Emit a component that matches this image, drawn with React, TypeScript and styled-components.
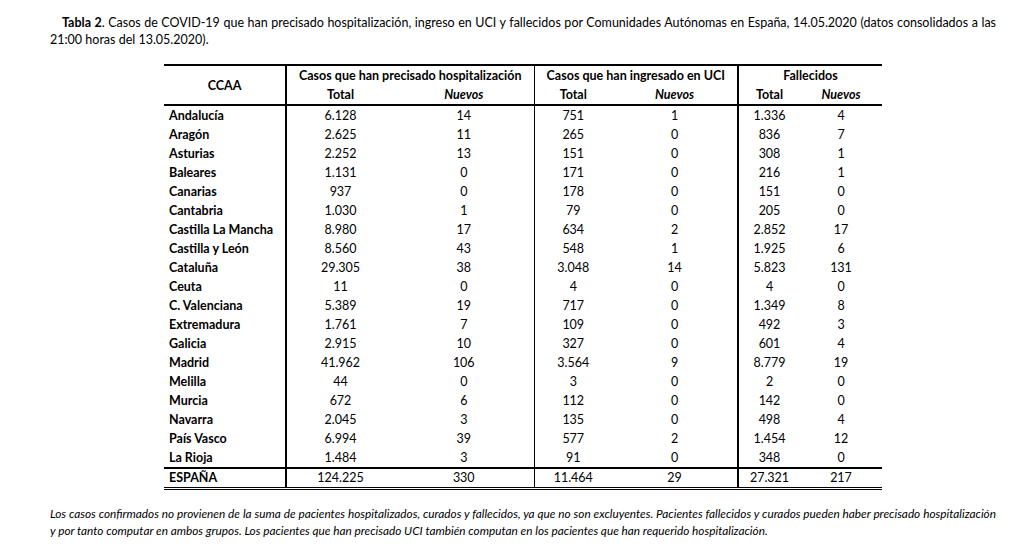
import React from "react";
import styled, { createGlobalStyle } from "styled-components";

const Global = createGlobalStyle`
  html, body { margin: 0; padding: 0; background: #fff; }
  body { font-family: Lato, "Open Sans", "Liberation Sans", sans-serif; color: #000; }
`;

const Page = styled.div`
  width: 1018px;
  height: 549px;
  box-sizing: border-box;
  padding: 14px 22px 0 50px;
  overflow: hidden;
`;

const Title = styled.p`
  margin: 0;
  font-size: 12.5px;
  line-height: 17px;
  text-align: justify;
  text-indent: 12px;
`;

const Strong = styled.b`
  font-weight: 700;
`;

const TableWrap = styled.div`
  display: flex;
  justify-content: center;
  margin-top: 16px;
`;

const Table = styled.table`
  width: 718px;
  table-layout: fixed;
  border-collapse: collapse;
  font-size: 12.5px;
  border-top: 2px solid #000;
`;

type Edge = "thick" | "thin" | "none";
const edge = (e?: Edge) =>
  e === "thick" ? "2px solid #000" : e === "thin" ? "1px solid #000" : "none";

const HeadCell = styled.th<{ $right?: Edge; $italic?: boolean; $bottom?: boolean }>`
  padding: 0;
  height: 19px;
  line-height: 19px;
  font-weight: 700;
  font-style: ${(p) => (p.$italic ? "italic" : "normal")};
  text-align: center;
  vertical-align: middle;
  border-right: ${(p) => edge(p.$right)};
  border-bottom: ${(p) => (p.$bottom ? "2px solid #000" : "none")};
  white-space: nowrap;
`;

const NameCell = styled.td<{ $h?: number }>`
  padding: 0 0 0 5px;
  height: ${(p) => p.$h ?? 19}px;
  line-height: ${(p) => p.$h ?? 19}px;
  font-weight: 700;
  text-align: left;
  border-right: 2px solid #000;
  white-space: nowrap;
`;

const NumCell = styled.td<{ $right?: Edge; $h?: number }>`
  padding: 0;
  height: ${(p) => p.$h ?? 19}px;
  line-height: ${(p) => p.$h ?? 19}px;
  text-align: center;
  border-right: ${(p) => edge(p.$right)};
`;

const TotalRow = styled.tr`
  border-top: 2px solid #000;
  border-bottom: 3px double #000;
`;

const Note = styled.p`
  margin: 15px 0 0;
  font-size: 11.8px;
  line-height: 17px;
  font-style: italic;
  text-align: justify;
`;

const rows: [string, string, string, string, string, string, string][] = [
  ["Andalucía", "6.128", "14", "751", "1", "1.336", "4"],
  ["Aragón", "2.625", "11", "265", "0", "836", "7"],
  ["Asturias", "2.252", "13", "151", "0", "308", "1"],
  ["Baleares", "1.131", "0", "171", "0", "216", "1"],
  ["Canarias", "937", "0", "178", "0", "151", "0"],
  ["Cantabria", "1.030", "1", "79", "0", "205", "0"],
  ["Castilla La Mancha", "8.980", "17", "634", "2", "2.852", "17"],
  ["Castilla y León", "8.560", "43", "548", "1", "1.925", "6"],
  ["Cataluña", "29.305", "38", "3.048", "14", "5.823", "131"],
  ["Ceuta", "11", "0", "4", "0", "4", "0"],
  ["C. Valenciana", "5.389", "19", "717", "0", "1.349", "8"],
  ["Extremadura", "1.761", "7", "109", "0", "492", "3"],
  ["Galicia", "2.915", "10", "327", "0", "601", "4"],
  ["Madrid", "41.962", "106", "3.564", "9", "8.779", "19"],
  ["Melilla", "44", "0", "3", "0", "2", "0"],
  ["Murcia", "672", "6", "112", "0", "142", "0"],
  ["Navarra", "2.045", "3", "135", "0", "498", "4"],
  ["País Vasco", "6.994", "39", "577", "2", "1.454", "12"],
  ["La Rioja", "1.484", "3", "91", "0", "348", "0"],
];

const total = ["ESPAÑA", "124.225", "330", "11.464", "29", "27.321", "217"];
const rightEdges: Edge[] = ["none", "thin", "none", "thick", "none", "none"];
const widths = [122, 108, 140, 78, 126, 62, 82];

export default function App() {
  return (
    <Page>
      <Global />
      <Title>
        <Strong>Tabla 2</Strong>
        <span>
          . Casos de COVID-19 que han precisado hospitalización, ingreso en UCI y fallecidos por
          Comunidades Autónomas en España, 14.05.2020 (datos consolidados a las 21:00 horas del
          13.05.2020).
        </span>
      </Title>
      <TableWrap>
        <Table>
          <colgroup>
            {widths.map((w, i) => (
              <col key={i} style={{ width: w }} />
            ))}
          </colgroup>
          <thead>
            <tr>
              <HeadCell rowSpan={2} $right="thick" $bottom>
                CCAA
              </HeadCell>
              <HeadCell colSpan={2} $right="thin">
                Casos que han precisado hospitalización
              </HeadCell>
              <HeadCell colSpan={2} $right="thick">
                Casos que han ingresado en UCI
              </HeadCell>
              <HeadCell colSpan={2}>Fallecidos</HeadCell>
            </tr>
            <tr>
              <HeadCell $bottom>Total</HeadCell>
              <HeadCell $bottom $italic $right="thin">
                Nuevos
              </HeadCell>
              <HeadCell $bottom>Total</HeadCell>
              <HeadCell $bottom $italic $right="thick">
                Nuevos
              </HeadCell>
              <HeadCell $bottom>Total</HeadCell>
              <HeadCell $bottom $italic>
                Nuevos
              </HeadCell>
            </tr>
          </thead>
          <tbody>
            {rows.map((r) => (
              <tr key={r[0]}>
                <NameCell>{r[0]}</NameCell>
                {r.slice(1).map((v, i) => (
                  <NumCell key={i} $right={rightEdges[i]}>
                    {v}
                  </NumCell>
                ))}
              </tr>
            ))}
            <TotalRow>
              <NameCell $h={18}>{total[0]}</NameCell>
              {total.slice(1).map((v, i) => (
                <NumCell key={i} $h={18} $right={rightEdges[i]}>
                  {v}
                </NumCell>
              ))}
            </TotalRow>
          </tbody>
        </Table>
      </TableWrap>
      <Note>
        Los casos confirmados no provienen de la suma de pacientes hospitalizados, curados y
        fallecidos, ya que no son excluyentes. Pacientes fallecidos y curados pueden haber precisado
        hospitalización y por tanto computar en ambos grupos. Los pacientes que han precisado UCI
        también computan en los pacientes que han requerido hospitalización.
      </Note>
    </Page>
  );
}
